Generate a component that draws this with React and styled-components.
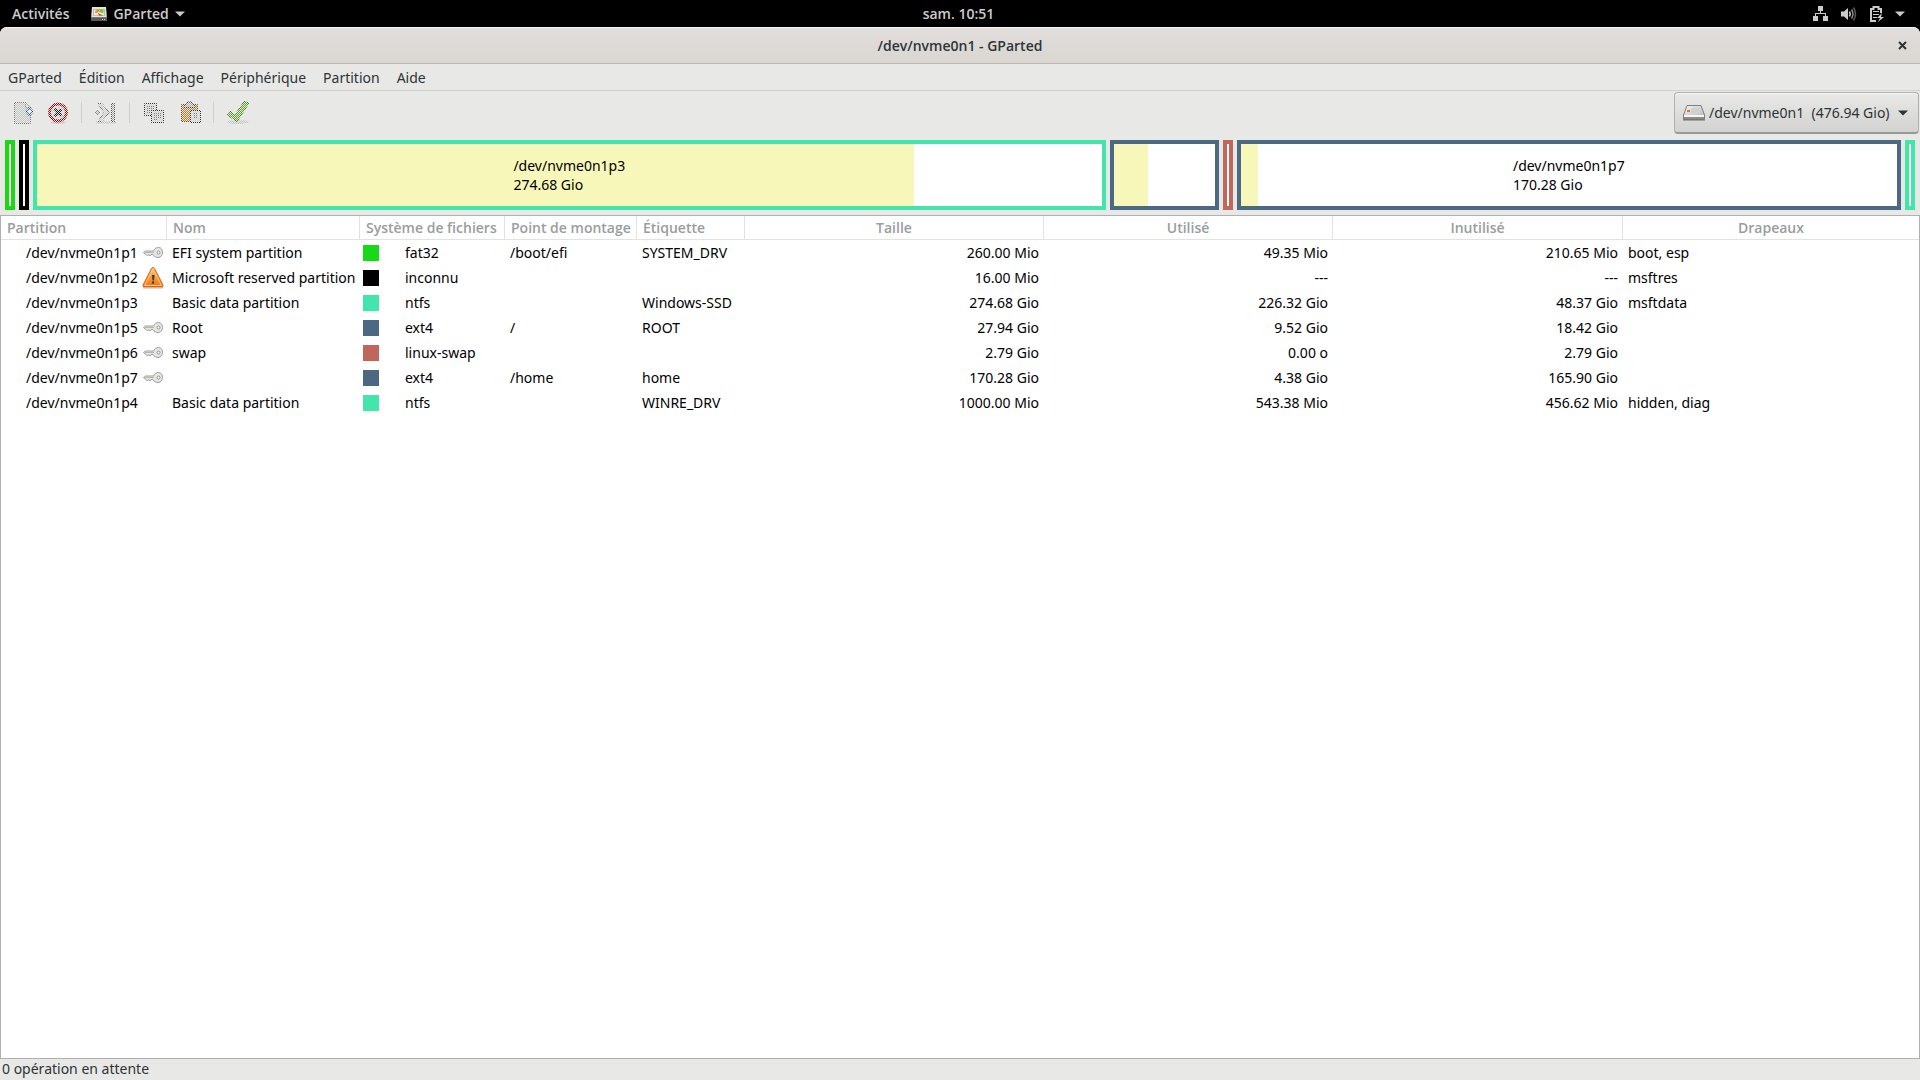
import React from "react";
import styled, { createGlobalStyle } from "styled-components";

const color = {
  bg: "#e8e8e6",
  text: "#2e3436",
  line: "#d1d1cf",
  frame: "#b0b0ad",
  used: "#f8f7ba",
  fat32: "#18d918",
  unknown: "#000000",
  ntfs: "#42e5ac",
  ext4: "#4b6983",
  swap: "#c1665a",
};

const GlobalStyle = createGlobalStyle`
  * { box-sizing: border-box; }
  body {
    margin: 0;
    background: #000;
    color: ${color.text};
    font-family: "Noto Sans", "Open Sans", sans-serif;
    font-size: 14px;
    line-height: 20px;
  }
  button, select {
    font: inherit;
    color: inherit;
    background: none;
    border: 0;
    margin: 0;
    padding: 0;
  }
`;

const Screen = styled.div`
  display: flex;
  flex-direction: column;
  min-height: 100vh;
`;

const TopBar = styled.header`
  display: grid;
  grid-template-columns: 1fr auto 1fr;
  align-items: center;
  height: 27px;
  padding: 0 15px 0 12px;
  background: #000;
  color: #cccccc;
  font-family: "Open Sans", sans-serif;
  font-weight: 600;
`;

const TopGroup = styled.div`
  display: flex;
  align-items: center;
  justify-content: ${(p) => (p.$end ? "flex-end" : "flex-start")};
  gap: 22px;
`;

const TopButton = styled.button`
  display: flex;
  align-items: center;
  gap: 6px;
`;

const StatusButton = styled(TopButton)`
  gap: 11px;
`;

const Window = styled.main`
  flex: 1;
  display: flex;
  flex-direction: column;
  background: ${color.bg};
  border-radius: 7px 7px 0 0;
`;

const TitleBar = styled.div`
  display: grid;
  grid-template-columns: 1fr auto 1fr;
  align-items: center;
  height: 37px;
  padding: 0 13px;
  border-top: 1px solid #f6f5f4;
  border-bottom: 1px solid #bdb7b1;
  border-radius: 7px 7px 0 0;
  background: linear-gradient(#e1dedb, #dad6d2);
`;

const Title = styled.h1`
  grid-column: 2;
  margin: 0;
  font-family: "Open Sans", sans-serif;
  font-size: 14px;
  font-weight: 600;
  line-height: 20px;
`;

const CloseButton = styled.button`
  display: flex;
  justify-self: end;
`;

const MenuBar = styled.nav`
  display: flex;
  gap: 1px;
  height: 27px;
  border-bottom: 1px solid ${color.line};
`;

const MenuItem = styled.button`
  padding: 2px 8px 0;
`;

const ToolBar = styled.div`
  display: flex;
  align-items: center;
  justify-content: space-between;
  height: 44px;
  padding: 0 1px 0 4px;
`;

const Tools = styled.div`
  display: flex;
  align-items: center;
  padding-bottom: 2px;
`;

const ToolButton = styled.button`
  display: flex;
  justify-content: center;
  width: 36px;
`;

const Separator = styled.span`
  width: 1px;
  height: 21px;
  margin: 0 6px 0 5px;
  background: #cfcfcd;
`;

const DevicePicker = styled.label`
  display: flex;
  align-items: center;
  height: 42px;
  padding: 0 10px 0 8px;
  border: 1px solid #b1b1ae;
  border-bottom: 2px solid #999996;
  border-radius: 4px;
  background: linear-gradient(#e9e9e7, #d2d2d0);
  box-shadow: inset 0 1px #f6f6f5;
`;

const DeviceSelect = styled.select`
  appearance: none;
  padding: 0 8px 0 4px;
`;

const DiskMap = styled.section`
  display: flex;
  gap: 4px;
  height: 80px;
  padding: 5px;
`;

const DiskBlock = styled.div`
  flex: ${(p) => (p.$weight ? `${p.$weight} 1 0` : "0 0 10px")};
  display: grid;
  border: 4px solid ${(p) => color[p.$kind]};
  background: #fff;
  color: #000;
`;

const DiskUsed = styled.div`
  grid-area: 1 / 1;
  background: ${color.used};
`;

const DiskLabel = styled.div`
  grid-area: 1 / 1;
  place-self: center;
  line-height: 19px;
`;

const ListFrame = styled.section`
  flex: 1;
  border: 1px solid ${color.frame};
  background: #fff;
`;

const Table = styled.table`
  width: 100%;
  table-layout: fixed;
  border-collapse: separate;
  border-spacing: 0;
  color: #000;
`;

const Col = styled.col`
  width: ${(p) => (p.$width ? `${p.$width}px` : "auto")};
`;

const HeadCell = styled.th`
  height: 24px;
  padding: 0 6px;
  border-bottom: 1px solid #e2e2e1;
  border-right: 1px solid #e2e2e1;
  color: #9a9d9d;
  font-family: "Open Sans", sans-serif;
  font-weight: 600;
  line-height: 20px;
  text-align: ${(p) => (p.$center ? "center" : "left")};
  white-space: nowrap;
  &:last-child { border-right: 0; }
`;

const Cell = styled.td`
  height: 25px;
  padding: 0 5px;
  text-align: ${(p) => (p.$right ? "right" : "left")};
  white-space: nowrap;
`;

const PartitionCell = styled.div`
  display: flex;
  align-items: center;
  justify-content: space-between;
  height: 25px;
  padding-left: 20px;
  margin-right: -2px;
`;

const FsCell = styled.div`
  display: flex;
  align-items: center;
  gap: 26px;
  margin-left: -2px;
`;

const Swatch = styled.span`
  width: 16px;
  height: 16px;
  background: ${(p) => color[p.$kind]};
`;

const StatusBar = styled.footer`
  height: 21px;
  padding: 0 2px;
`;

const Arrow = ({ fill }) => (
  <svg width="10" height="6" viewBox="0 0 10 6" aria-hidden="true">
    <path d="M0 0.5h10L5 5.5z" fill={fill} />
  </svg>
);

/* Toolbar icon drawn as insensitive: every second pixel shows the toolbar. */
const ToolIcon = ({ id, children }) => (
  <svg width="24" height="24" viewBox="0 0 24 24" fill="none" aria-hidden="true">
    <defs>
      <pattern id={`stipple-${id}`} width="2" height="2" patternUnits="userSpaceOnUse">
        <rect width="1" height="1" fill={color.bg} />
        <rect x="1" y="1" width="1" height="1" fill={color.bg} />
      </pattern>
    </defs>
    {children}
    <rect width="24" height="24" fill={`url(#stipple-${id})`} shapeRendering="crispEdges" />
  </svg>
);

const NewIcon = () => (
  <ToolIcon id="new">
    <path d="M4.5 2.5h11l5 5v16h-16z" fill="#c6c7c5" stroke="#777975" />
    <path d="M15.5 2.5v5h5" fill="#ddd" stroke="#8a8c88" />
    <path d="M19.5 7l4 4.500-4 4.500-4-4.500z" fill="#204a87" stroke="#183a70" />
    <path d="M19.500 9v5M17 11.500h5" stroke="#fff" strokeWidth="1.500" />
  </ToolIcon>
);

const DeleteIcon = () => (
  <ToolIcon id="delete">
    <ellipse cx="12" cy="22.500" rx="8" ry="1.500" fill="#b4b4b2" />
    <circle cx="12" cy="12.500" r="8.500" fill="#d6d6d4" stroke="#a40000" strokeWidth="3" />
    <path d="M8.500 9l7 7M15.500 9l-7 7" stroke="#101214" strokeWidth="3" />
  </ToolIcon>
);

const ResizeIcon = () => (
  <ToolIcon id="resize">
    <path d="M2 22.500h20" stroke="#b8b8b6" strokeWidth="2" />
    <circle cx="3.500" cy="12.500" r="2" fill="#bbb" stroke="#6a6c68" />
    <path d="M4 3.500h4l7 9-7 9H4l6-9z" fill="#d0d0ce" stroke="#5f615d" />
    <path d="M17.500 3.500h3v18h-3z" fill="#aaa" stroke="#555753" />
  </ToolIcon>
);

const CopyIcon = () => (
  <ToolIcon id="copy">
    <path d="M2.500 3.500h12v12h-12z" fill="#d2d2d0" stroke="#30322f" />
    <path d="M5 6.500h7M5 8.500h7M5 10.500h7M5 12.500h4" stroke="#777" />
    <path d="M9.500 10.500h12v12h-12z" fill="#d2d2d0" stroke="#30322f" />
    <path d="M12 13.500h7M12 15.500h7M12 17.500h7M12 19.500h4" stroke="#777" />
  </ToolIcon>
);

const PasteIcon = () => (
  <ToolIcon id="paste">
    <path d="M3.500 4.500h16v17h-16z" fill="#b8792a" stroke="#7a4a02" />
    <path d="M6.500 7.500v-2l2-1 1-2.500h4l1 2.500 2 1v2z" fill="#aaa" stroke="#333532" />
    <path d="M12.500 10.500h10v12h-10z" fill="#d2d2d0" stroke="#30322f" />
    <path d="M15 13.500h5M15 15.500h5M15 17.500h5" stroke="#777" />
  </ToolIcon>
);

const ApplyIcon = () => (
  <ToolIcon id="apply">
    <ellipse cx="12" cy="22" rx="11" ry="2" fill="#c4c4c2" />
    <path d="M0.500 14.500l3.500-3.500 5 4L18 1.500l5 1.500-12 18.500z" fill="#62a02c" stroke="#3c7814" />
  </ToolIcon>
);

const GPartedIcon = () => (
  <svg width="16" height="14" viewBox="0 0 16 14" aria-hidden="true">
    <path d="M1 0h14l1 10v4H0v-4z" fill="#777" />
    <path d="M1 0h14l.5 10H.5z" fill="#e4e4e2" />
    <path d="M2.500 2h11v7h-11z" fill="#8c8e8a" />
    <path d="M3 2.500h10v6H3z" fill="#f5f0d0" />
    <path d="M4 6a4 3 0 0 1 5-3.500l-2 3z" fill="#ef8a2b" />
    <path d="M9 2.500h3.500v4L8 5z" fill="#73c834" />
    <path d="M7 6l5 2.500H8z" fill="#dd3030" />
    <path d="M0 11h16v3H0z" fill="#5a5c58" />
    <path d="M11 12h1v1h-1zM13 12h1v1h-1z" fill="#ddd" />
  </svg>
);

const NetworkIcon = () => (
  <svg width="17" height="15" viewBox="-2 0 17 15" fill="#cccccc" aria-hidden="true">
    <path d="M5 0h5v5H8v2h5v3h2v5h-5v-5h2V8H3v2h2v5H0v-5h2V7h5V5H5z" />
  </svg>
);

const VolumeIcon = () => (
  <svg width="20" height="14" viewBox="-2 0 20 14" fill="none" aria-hidden="true">
    <path d="M0 4.500h3L7 1v12L3 9.500H0z" fill="#cccccc" />
    <path d="M8.500 4.500q1.500 2.500 0 5" stroke="#cccccc" strokeWidth="1.500" />
    <path d="M10.500 2.500q3 4.500 0 9" stroke="#8a8a8a" strokeWidth="1.500" />
    <path d="M12.500 0.500q4 6.500 0 13" stroke="#5a5a5a" strokeWidth="1.500" />
  </svg>
);

const BatteryIcon = () => (
  <svg width="14" height="16" viewBox="0 0 14 16" fill="none" aria-hidden="true">
    <path d="M6 15H1V3h2.500V1h5v2H11v4" stroke="#cccccc" strokeWidth="2" />
    <path d="M3 5.500h6M3 8.500h6M3 11.500h4" stroke="#cccccc" />
    <path d="M12 7l-5 5h3l-2 4 6-5h-3z" fill="#cccccc" />
  </svg>
);

const CloseIcon = () => (
  <svg width="9" height="9" viewBox="0 0 9 9" aria-hidden="true">
    <path d="M1 1l7 7M8 1L1 8" stroke={color.text} strokeWidth="2" />
  </svg>
);

const DriveIcon = () => (
  <svg width="22" height="16" viewBox="0 0 22 16" aria-hidden="true">
    <defs>
      <linearGradient id="drive-top" x1="0" y1="0" x2="1" y2="1">
        <stop offset="0" stopColor="#f4f4f3" />
        <stop offset="1" stopColor="#b4b4b2" />
      </linearGradient>
    </defs>
    <path d="M4 .5h14l3.500 9.500v4.500h-21V10z" fill="url(#drive-top)" stroke="#7d7f7b" />
    <ellipse cx="12" cy="6" rx="4.500" ry="3.500" fill="#d0d0ce" />
    <path d="M1 10h20v2H1z" fill="#f6f6f5" />
    <path d="M1 13h20" stroke="#8a8c88" strokeWidth="2" />
    <path d="M0 15h22" stroke="#6f716d" strokeWidth="1" />
    <path d="M4 5h3v2H4z" fill="#e07b28" />
  </svg>
);

const KeyIcon = () => (
  <svg width="22" height="22" viewBox="0 0 22 22" aria-hidden="true">
    <path
      d="M1.500 10.500l2-1.500h8c1-2.500 3-3.500 5-3.500 3 0 4 2.500 4 5s-1.500 5-4.500 5c-2 0-4-1-5-3H9l-1 1.500-1.500-1.500-1 1.500L4 12.500z"
      fill="#e6e6e3"
      stroke="#9c9e9a"
    />
    <path d="M3 10.500h9" stroke="#b5b7b3" />
    <circle cx="16.500" cy="10.500" r="1.500" fill="#fff" stroke="#8f918d" />
  </svg>
);

const WarningIcon = () => (
  <svg width="22" height="22" viewBox="0 0 22 22" aria-hidden="true">
    <defs>
      <linearGradient id="warning-fill" x1="0" y1="0" x2="0" y2="1">
        <stop offset="0" stopColor="#fdc07a" />
        <stop offset="1" stopColor="#f57900" />
      </linearGradient>
    </defs>
    <path d="M1 20.500h20" stroke="#c9b8a8" strokeWidth="2" />
    <path d="M11 .5q1 0 1.500 1l8.500 16.500q.5 1.500-1 1.500H2q-1.500 0-1-1.500L9.500 1.500q.5-1 1.500-1z" fill="url(#warning-fill)" stroke="#d9660a" />
    <path d="M11 2.500l8.500 16h-17z" fill="none" stroke="#fdc896" />
    <path d="M10 8h2.500l-.5 5.500h-1.500z" fill="#3c3c3c" />
    <circle cx="11" cy="15.500" r="1.200" fill="#3c3c3c" />
  </svg>
);

const menus = ["GParted", "Édition", "Affichage", "Périphérique", "Partition", "Aide"];

const tools = [
  { label: "Nouvelle partition", Icon: NewIcon },
  { label: "Supprimer", Icon: DeleteIcon },
  null,
  { label: "Redimensionner", Icon: ResizeIcon },
  null,
  { label: "Copier", Icon: CopyIcon },
  { label: "Coller", Icon: PasteIcon },
  null,
  { label: "Appliquer", Icon: ApplyIcon },
];

const columns = [
  { name: "Partition", width: 166 },
  { name: "Nom", width: 193 },
  { name: "Système de fichiers", width: 145 },
  { name: "Point de montage", width: 132 },
  { name: "Étiquette", width: 108 },
  { name: "Taille", width: 299, center: true },
  { name: "Utilisé", width: 289, center: true },
  { name: "Inutilisé", width: 290, center: true },
  { name: "Drapeaux", center: true },
];

const partitions = [
  { dev: "/dev/nvme0n1p1", mark: "key", name: "EFI system partition", kind: "fat32", fs: "fat32", mount: "/boot/efi", label: "SYSTEM_DRV", size: "260.00 Mio", used: "49.35 Mio", free: "210.65 Mio", flags: "boot, esp", ratio: 0.19 },
  { dev: "/dev/nvme0n1p2", mark: "warning", name: "Microsoft reserved partition", kind: "unknown", fs: "inconnu", mount: "", label: "", size: "16.00 Mio", used: "---", free: "---", flags: "msftres", ratio: 0 },
  { dev: "/dev/nvme0n1p3", name: "Basic data partition", kind: "ntfs", fs: "ntfs", mount: "", label: "Windows-SSD", size: "274.68 Gio", used: "226.32 Gio", free: "48.37 Gio", flags: "msftdata", ratio: 0.824, weight: 1064, titled: true },
  { dev: "/dev/nvme0n1p5", mark: "key", name: "Root", kind: "ext4", fs: "ext4", mount: "/", label: "ROOT", size: "27.94 Gio", used: "9.52 Gio", free: "18.42 Gio", flags: "", ratio: 0.34, weight: 101 },
  { dev: "/dev/nvme0n1p6", mark: "key", name: "swap", kind: "swap", fs: "linux-swap", mount: "", label: "", size: "2.79 Gio", used: "0.00 o", free: "2.79 Gio", flags: "", ratio: 0 },
  { dev: "/dev/nvme0n1p7", mark: "key", name: "", kind: "ext4", fs: "ext4", mount: "/home", label: "home", size: "170.28 Gio", used: "4.38 Gio", free: "165.90 Gio", flags: "", ratio: 0.026, weight: 656, titled: true },
  { dev: "/dev/nvme0n1p4", name: "Basic data partition", kind: "ntfs", fs: "ntfs", mount: "", label: "WINRE_DRV", size: "1000.00 Mio", used: "543.38 Mio", free: "456.62 Mio", flags: "hidden, diag", ratio: 0.54 },
];

export default function App() {
  return (
    <Screen>
      <GlobalStyle />
      <TopBar>
        <TopGroup>
          <TopButton>Activités</TopButton>
          <TopButton>
            <GPartedIcon />
            GParted
            <Arrow fill="#cccccc" />
          </TopButton>
        </TopGroup>
        <TopButton>sam. 10:51</TopButton>
        <TopGroup $end>
          <StatusButton aria-label="Système">
            <NetworkIcon />
            <VolumeIcon />
            <BatteryIcon />
            <Arrow fill="#cccccc" />
          </StatusButton>
        </TopGroup>
      </TopBar>
      <Window>
        <TitleBar>
          <Title>/dev/nvme0n1 - GParted</Title>
          <CloseButton aria-label="Fermer">
            <CloseIcon />
          </CloseButton>
        </TitleBar>
        <MenuBar>
          {menus.map((m) => (
            <MenuItem key={m}>{m}</MenuItem>
          ))}
        </MenuBar>
        <ToolBar>
          <Tools>
            {tools.map((t, i) =>
              t ? (
                <ToolButton key={t.label} aria-label={t.label} disabled>
                  <t.Icon />
                </ToolButton>
              ) : (
                <Separator key={i} />
              )
            )}
          </Tools>
          <DevicePicker>
            <DriveIcon />
            <DeviceSelect aria-label="Périphérique">
              <option>{"/dev/nvme0n1\u00a0\u00a0(476.94 Gio)"}</option>
            </DeviceSelect>
            <Arrow fill={color.text} />
          </DevicePicker>
        </ToolBar>
        <DiskMap>
          {partitions.map((p) => (
            <DiskBlock key={p.dev} $kind={p.kind} $weight={p.weight}>
              <DiskUsed style={{ width: `${p.ratio * 100}%` }} />
              {p.titled && (
                <DiskLabel>
                  {p.dev}
                  <br />
                  {p.size}
                </DiskLabel>
              )}
            </DiskBlock>
          ))}
        </DiskMap>
        <ListFrame>
          <Table>
            <colgroup>
              {columns.map((c) => (
                <Col key={c.name} $width={c.width} />
              ))}
            </colgroup>
            <thead>
              <tr>
                {columns.map((c) => (
                  <HeadCell key={c.name} scope="col" $center={c.center}>
                    {c.name}
                  </HeadCell>
                ))}
              </tr>
            </thead>
            <tbody>
              {partitions.map((p) => (
                <tr key={p.dev}>
                  <Cell>
                    <PartitionCell>
                      {p.dev}
                      {p.mark === "key" && <KeyIcon />}
                      {p.mark === "warning" && <WarningIcon />}
                    </PartitionCell>
                  </Cell>
                  <Cell>{p.name}</Cell>
                  <Cell>
                    <FsCell>
                      <Swatch $kind={p.kind} />
                      {p.fs}
                    </FsCell>
                  </Cell>
                  <Cell>{p.mount}</Cell>
                  <Cell>{p.label}</Cell>
                  <Cell $right>{p.size}</Cell>
                  <Cell $right>{p.used}</Cell>
                  <Cell $right>{p.free}</Cell>
                  <Cell>{p.flags}</Cell>
                </tr>
              ))}
            </tbody>
          </Table>
        </ListFrame>
        <StatusBar>0 opération en attente</StatusBar>
      </Window>
    </Screen>
  );
}
